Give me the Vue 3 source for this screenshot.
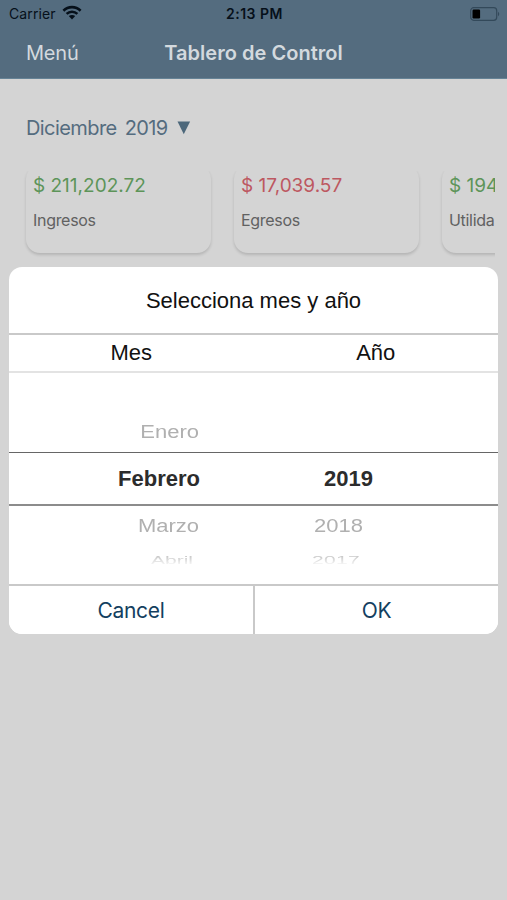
<template>
  <div class="screen">
    <header class="top">
      <div class="status-bar">
        <div class="carrier">
          <span class="carrier-name">Carrier</span>
          <svg class="wifi" width="20" height="15" viewBox="0 0 20 15">
            <path d="M1.4 5.7C6.3 0.9 13.7 0.9 18.6 5.7" />
            <path d="M4.6 8.9C7.7 6 12.3 6 15.4 8.9" />
            <path class="dot" d="M6.8 11.1C8.6 9.5 11.4 9.5 13.2 11.1L10 14.4Z" />
          </svg>
        </div>
        <span class="clock">2:13 PM</span>
        <svg class="battery" width="30" height="14" viewBox="0 0 30 14">
          <rect class="shell" x="0.7" y="0.7" width="26" height="12.6" rx="3" />
          <rect x="2.5" y="2.5" width="7.6" height="9" rx="1.2" />
          <path class="cap" d="M28 4.8C29.7 5.6 29.7 8.4 28 9.2Z" />
        </svg>
      </div>
      <nav class="nav-bar">
        <a class="menu">Menú</a>
        <h1 class="title">Tablero de Control</h1>
      </nav>
    </header>

    <main class="content">
      <div class="period">
        <span class="period-text">Diciembre 2019</span>
        <svg width="14" height="14" viewBox="0 0 14 14"><path d="M0.5 0.5H13.1L6.8 13.2Z" /></svg>
      </div>
      <div class="cards">
        <div v-for="card in cards" :key="card.label" class="card">
          <span class="amount" :class="card.type">{{ card.amount }}</span>
          <span class="label">{{ card.label }}</span>
        </div>
      </div>
    </main>

    <div class="modal">
      <div class="modal-title"><span>Selecciona mes y año</span></div>
      <div class="modal-header">
        <span>Mes</span>
        <span>Año</span>
      </div>
      <div class="picker">
        <div v-for="row in rows" :key="row.month" class="row" :class="row.state">
          <span class="month">{{ row.month }}</span>
          <span class="year">{{ row.year }}</span>
        </div>
      </div>
      <div class="modal-actions">
        <button type="button" class="cancel" @click="cancel"><span>Cancel</span></button>
        <button type="button" class="ok" @click="accept"><span>OK</span></button>
      </div>
    </div>
  </div>
</template>

<script setup>
import { ref } from 'vue';

const accepted = ref(false);

const cards = [
  { amount: '$ 211,202.72', label: 'Ingresos', type: 'positive' },
  { amount: '$ 17,039.57', label: 'Egresos', type: 'negative' },
  { amount: '$ 194', label: 'Utilida', type: 'positive' },
];

const rows = [
  { month: 'Enero', year: '', state: 'before' },
  { month: 'Febrero', year: '2019', state: 'selected' },
  { month: 'Marzo', year: '2018', state: 'after' },
  { month: 'Abril', year: '2017', state: 'far' },
];

const cancel = () => {
  accepted.value = false;
};

const accept = () => {
  accepted.value = true;
};
</script>

<style>
body {
  background: #d4d4d4;
}
</style>

<style scoped>
.screen {
  position: relative;
  height: 900px;
  overflow: hidden;
  background: #d4d4d4;
  font-family: Inter, Roboto, sans-serif;
}

.top {
  height: 79px;
  box-sizing: border-box;
  background: #546c7f;
  border-bottom: 1px solid #668396;
}

.status-bar {
  display: grid;
  grid-template-columns: 1fr auto 1fr;
  align-items: center;
  height: 27px;
  padding: 0 7px 0 9px;
  color: #06101a;
  font-size: 14px;
}

.carrier {
  display: flex;
  align-items: center;
  gap: 6px;
}

.carrier-name {
  letter-spacing: 0.1px;
}

.wifi {
  margin-top: -2px;
}

.wifi path {
  fill: none;
  stroke: #06101a;
  stroke-width: 2.6;
}

.wifi .dot {
  fill: #06101a;
  stroke: none;
}

.clock {
  font-weight: 600;
  letter-spacing: 0.5px;
}

.battery {
  justify-self: end;
}

.battery .shell {
  fill: none;
  stroke: #33495a;
  stroke-width: 1.2;
}

.battery .cap {
  fill: #33495a;
}

.nav-bar {
  display: grid;
  grid-template-columns: 1fr auto 1fr;
  align-items: center;
  height: 51px;
  padding: 0 25px;
  color: #d3d9de;
}

.menu {
  padding-left: 1px;
  font-size: 20px;
  letter-spacing: -0.2px;
}

.title {
  margin: 0;
  font-size: 20px;
  font-weight: 600;
  letter-spacing: 0.03px;
}

.content {
  padding: 36px 12px 0 26px;
}

.period {
  display: flex;
  align-items: center;
  gap: 9px;
  height: 26px;
  color: #546c7f;
  font-size: 20px;
}

.period-text {
  letter-spacing: -0.58px;
  word-spacing: 3px;
}

.period svg {
  fill: #4d687b;
}

.cards {
  display: flex;
  gap: 23px;
  height: 100px;
  margin-top: 24px;
  margin-left: -6px;
  padding-left: 6px;
  overflow: hidden;
}

.card {
  display: flex;
  flex-direction: column;
  flex: 0 0 185px;
  box-sizing: border-box;
  height: 88px;
  padding: 8px 7px;
  border-radius: 14px;
  background: #d4d4d4;
  box-shadow: 0 2px 3px rgba(0, 0, 0, 0.15);
  clip-path: inset(6px -6px -8px);
}

.amount {
  height: 24px;
  font-size: 19px;
  line-height: 25px;
  white-space: nowrap;
}

.positive {
  color: #5d9459;
}

.negative {
  color: #bd5861;
}

.label {
  margin-top: 13px;
  color: #616161;
  font-size: 16px;
  letter-spacing: -0.3px;
  line-height: 20px;
}

/* Month and year dialog */
.modal {
  position: absolute;
  top: 267px;
  left: 9px;
  width: 489px;
  height: 367px;
  overflow: hidden;
  border-radius: 13px;
  background: #fff;
  color: #111;
  font-family: "Liberation Sans", Arial, sans-serif;
  font-size: 22px;
}

.modal-title {
  display: flex;
  align-items: center;
  justify-content: center;
  box-sizing: border-box;
  height: 68px;
  padding-top: 2px;
  border-bottom: 2px solid #c9c9c9;
}

.modal-header {
  display: grid;
  grid-template-columns: 1fr 1fr;
  height: 36px;
  border-bottom: 2px solid #e3e3e3;
  line-height: 36px;
  text-align: center;
}

.picker {
  box-sizing: border-box;
  height: 213px;
  padding-top: 39px;
  border-bottom: 2px solid #c9c9c9;
}

.row {
  display: grid;
  grid-template-columns: 191px 1fr;
  align-items: center;
  height: 40px;
  color: #b0b0b0;
}

.month {
  justify-self: end;
}

.year {
  margin-left: 114px;
  justify-self: start;
}

.before .month,
.after .month {
  margin-right: 1px;
}

.before span,
.after span {
  transform: scaleY(0.86);
}

.selected {
  height: 51px;
  border-top: 1px solid #666;
  border-bottom: 2px solid #8c8c8c;
  color: #2c2c2c;
  font-weight: bold;
}

.selected .year {
  margin-left: 124px;
}

.after {
  height: 40px;
}

.far {
  height: 28px;
  font-size: 21px;
  -webkit-mask-image: linear-gradient(#000 20%, transparent 72%);
  mask-image: linear-gradient(#000 20%, transparent 72%);
}

.far span {
  transform: scaleY(0.56);
}

.far .month {
  margin-right: 7px;
}

.far .year {
  margin-left: 112px;
  letter-spacing: 0.3px;
}

.modal-actions {
  display: grid;
  grid-template-columns: 246px 1fr;
  height: 48px;
}

button {
  padding: 0;
  border: 0;
  background: #fff;
  color: #143f60;
  font-family: Inter, Roboto, sans-serif;
  font-size: 21px;
  letter-spacing: -0.3px;
}

.cancel {
  border-right: 2px solid #c9c9c9;
}
</style>
